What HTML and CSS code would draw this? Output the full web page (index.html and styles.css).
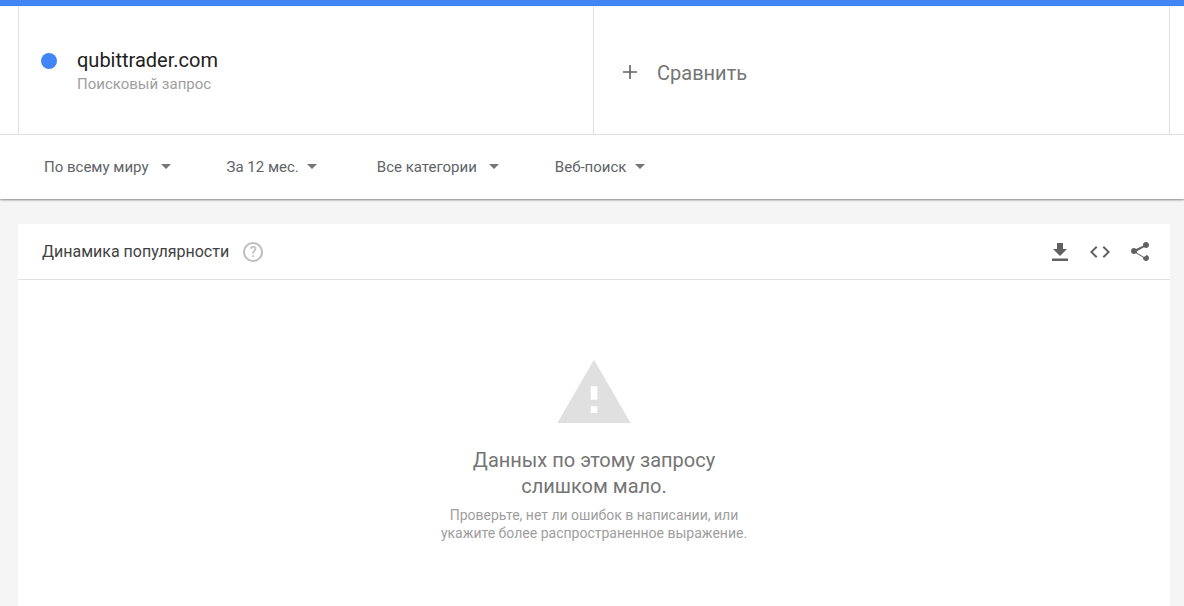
FILE: index.html
```html
<!DOCTYPE html>
<html lang="ru">
<head>
    <meta charset="UTF-8">
    <title>Google Trends</title>
    <link rel="stylesheet" href="styles.css">
</head>
<body>
    <div class="topBar"></div>
    <div class="header">
        <div class="compare">
            <div class="term">
                <span class="dot"></span>
                <div>
                    <div class="termName">qubittrader.com</div>
                    <div class="termType">Поисковый запрос</div>
                </div>
            </div>
            <div class="term addTerm">
                <svg class="plus" width="16" height="16" viewBox="0 0 16 16"><path d="M7.2 1h1.6v6.2H15v1.6H8.800V15H7.200V8.800H1V7.200h6.200z"/></svg>
                <span>Сравнить</span>
            </div>
        </div>
        <div class="filters">
            <div class="filter f1">По всему миру<span class="arrow"></span></div>
            <div class="filter f2">За 12 мес.<span class="arrow"></span></div>
            <div class="filter f3">Все категории<span class="arrow"></span></div>
            <div class="filter f4">Веб-поиск<span class="arrow"></span></div>
        </div>
    </div>
    <div class="card">
        <div class="cardHead">
            <span class="cardTitle">Динамика популярности</span>
            <span class="help">?</span>
            <div class="tools">
                <svg width="24" height="24" viewBox="0 0 24 24"><path d="M19 9h-4V3H9v6H5l7 7 7-7zM4 18.500h16V21H4z"/></svg>
                <svg width="24" height="24" viewBox="0 0 24 24"><path d="M9.400 16.600 4.800 12l4.600-4.600L8 6l-6 6 6 6zM14.600 16.600l4.600-4.600-4.600-4.600L16 6l6 6-6 6z"/></svg>
                <svg width="24" height="24" viewBox="0 0 24 24"><path d="M18 16.100c-.8 0-1.400.3-2 .8l-7.100-4.200c.1-.2.100-.5.100-.7s0-.5-.1-.7L16 7.200c.5.500 1.200.8 2 .8 1.700 0 3-1.300 3-3s-1.300-3-3-3-3 1.300-3 3c0 .2 0 .5.100.7L8 8.900C7.500 8.400 6.800 8.100 6 8.100c-1.700 0-3 1.300-3 3s1.300 3 3 3c.8 0 1.500-.3 2-.8l7.100 4.200c-.1.200-.1.400-.1.600 0 1.600 1.300 2.900 3 2.900s3-1.300 3-2.900-1.300-3-3-3z"/></svg>
            </div>
        </div>
        <div class="empty">
            <svg class="warn" width="80" height="80" viewBox="0 0 24 24"><path d="M1 21h22L12 2 1 21zm12-3h-2v-2h2v2zm0-4h-2v-4h2v4z"/></svg>
            <div class="emptyTitle">Данных по этому запросу<br>слишком мало.</div>
            <div class="emptyText">Проверьте, нет ли ошибок в написании, или<br>укажите более распространенное выражение.</div>
        </div>
    </div>
</body>
</html>
```

FILE: styles.css
```css
body{
    margin: 0;
    height: 606px;
    overflow: hidden;
    background: #f5f5f5;
    font-family: Roboto, "Liberation Sans", sans-serif;
}

.topBar{
    height: 6px;
    background: #4285f4;
}

.header{
    background: #fff;
    box-shadow: 0 1px 2px rgba(0,0,0,.45);
}

.compare{
    display: flex;
    height: 128px;
    margin: 0 14px 0 18px;
    border-left: 1px solid #e0e0e0;
    border-right: 1px solid #e0e0e0;
}

.term{
    display: flex;
    align-items: center;
    width: 574px;
    padding-top: 1px;
    box-sizing: border-box;
}

.dot{
    width: 16px;
    height: 16px;
    margin: 0 20px 20px 22px;
    border-radius: 50%;
    background: #4285f4;
}

.termName{
    font-size: 20px;
    line-height: 24px;
    color: #212121;
}

.termType{
    margin-top: 2px;
    font-size: 15px;
    line-height: 20px;
    color: #9e9e9e;
}

.addTerm{
    flex: 1;
    border-left: 1px solid #e0e0e0;
    padding-left: 28px;
    padding-top: 5px;
    font-size: 20px;
    color: #757575;
}

.plus{
    margin-right: 19px;
    margin-bottom: 2px;
    fill: #616161;
}

.filters{
    display: flex;
    align-items: center;
    height: 65px;
    padding: 0 0 1px 44px;
    border-top: 1px solid #e0e0e0;
    box-sizing: border-box;
    font-size: 15px;
    color: #5f6368;
}

.filter{
    display: flex;
    align-items: center;
}

.f1{
    margin-right: 56px;
}

.f2{
    margin-right: 60px;
}

.f3{
    margin-right: 56px;
}

.arrow{
    width: 0;
    height: 0;
    margin-left: 12px;
    border-left: 5.500px solid transparent;
    border-right: 5.500px solid transparent;
    border-top: 5.500px solid #757575;
}

.f2 .arrow{
    margin-left: 8px;
}

.f4 .arrow{
    margin-left: 9px;
}

.card{
    width: 1152px;
    height: 382px;
    margin: 25px 0 0 18px;
    background: #fff;
}

.cardHead{
    display: flex;
    align-items: center;
    height: 55px;
    padding: 0 8px 0 24px;
    border-bottom: 1px solid #e0e0e0;
}

.cardTitle{
    font-size: 16px;
    color: #424242;
}

.help{
    width: 16px;
    height: 16px;
    margin-left: 14px;
    border: 2px solid #bdbdbd;
    border-radius: 50%;
    font-size: 14px;
    font-weight: 500;
    line-height: 16px;
    text-align: center;
    color: #bdbdbd;
}

.tools{
    display: flex;
    gap: 16px;
    margin-left: auto;
    margin-right: 10px;
}

.tools svg{
    fill: #616161;
}

.empty{
    text-align: center;
    padding-top: 73px;
    width: 1152px;
}

.warn{
    display: block;
    margin: 0 auto;
    fill: #e0e0e0;
}

.emptyTitle{
    margin-top: 14px;
    font-size: 20px;
    line-height: 26px;
    color: #757575;
}

.emptyText{
    margin-top: 7px;
    font-size: 14px;
    line-height: 18px;
    color: #9e9e9e;
}
```
